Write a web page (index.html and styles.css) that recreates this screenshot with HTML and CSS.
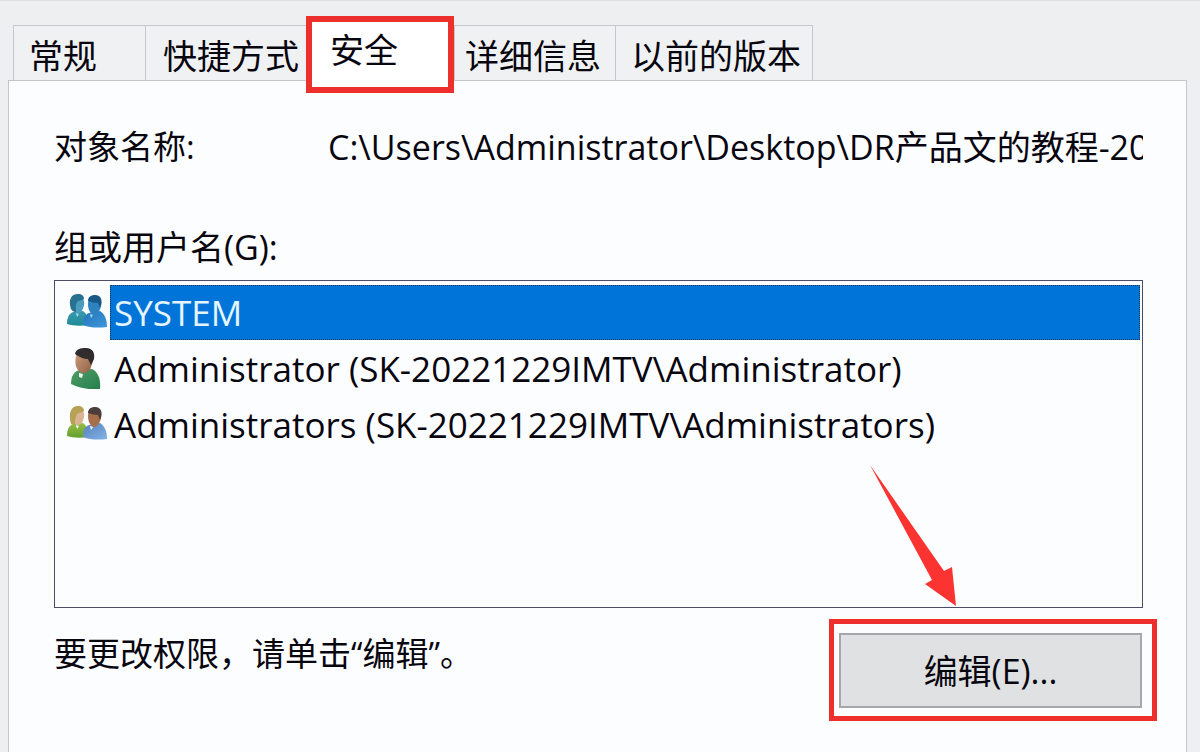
FILE: index.html
```html
<!doctype html>
<html lang="zh-CN">
    <head>
        <meta charset="utf-8" />
        <title>属性</title>
        <link rel="stylesheet" href="styles.css" />
    </head>
    <body>
        <div class="tabs" role="tablist">
            <button class="tab" role="tab">常规</button>
            <button class="tab" role="tab">快捷方式</button>
            <button class="tab active" role="tab" aria-selected="true">安全</button>
            <button class="tab" role="tab">详细信息</button>
            <button class="tab" role="tab">以前的版本</button>
        </div>

        <main class="panel" role="tabpanel">
            <div class="object-row">
                <span class="object-label">对象名称:</span>
                <span class="object-path">C:\Users\Administrator\Desktop\DR产品文的教程-20</span>
            </div>

            <div id="groupLabel" class="group-label">组或用户名(G):</div>
            <ul class="user-list" role="listbox" aria-labelledby="groupLabel">
                <li class="user" role="option" aria-selected="true">
                    <svg class="user-icon" viewBox="0 0 40 40">
                        <defs>
                            <linearGradient id="teal" x2="0" y2="1">
                                <stop offset="0" stop-color="#3a99ad" />
                                <stop offset="1" stop-color="#1f8a96" />
                            </linearGradient>
                            <linearGradient id="blue" x2="1" y2="1">
                                <stop offset="0" stop-color="#2474b8" />
                                <stop offset="1" stop-color="#3f97dc" />
                            </linearGradient>
                        </defs>
                        <path fill="url(#teal)" d="M0 32c0-7 2-10 6-12l10-1c4 3 6 8 5 14-7 1-15 1-21-1z" />
                        <path fill="#4a9cc0" d="M5 10c1-4 4-6 7-6 4 1 6 5 5 9-1 5-3 8-6 8-4 0-6-5-6-11z" />
                        <path fill="#28718f" d="M4 17C1 8 4 2 11 2c4 0 6 2 6 5-3 2-5 1-7 3-2 3-1 6-1 10-2 0-4-1-5-3z" />
                        <path fill="url(#blue)" d="M16 33c0-6 1-10 6-12l11-2c5 3 7 9 7 16-8 1-17 1-24-2z" />
                        <path fill="#2f82c0" d="M21 12c0-5 3-8 7-8 5 0 7 5 6 10-1 5-4 9-7 9-4-1-6-6-6-11z" />
                        <path fill="#195887" d="M21 9c0-4 3-6 7-6 7 0 8 7 5 13l-2-5c-3 0-7-1-10-2z" />
                        <path fill="#a7dff2" d="M9 21l3 1-2 3zM23 22l3 1-2 3z" />
                    </svg>
                    <span class="user-name">SYSTEM</span>
                </li>
                <li class="user" role="option" aria-selected="false">
                    <svg class="user-icon" viewBox="0 0 40 40">
                        <defs>
                            <linearGradient id="green" x2="1" y2="1">
                                <stop offset="0" stop-color="#529d66" />
                                <stop offset="1" stop-color="#237f4d" />
                            </linearGradient>
                            <linearGradient id="skin" x2="1" y2="1">
                                <stop offset="0" stop-color="#d0a27e" />
                                <stop offset="1" stop-color="#8d5d43" />
                            </linearGradient>
                        </defs>
                        <path fill="url(#green)" d="M4 36c0-8 3-13 9-14l12-1c6 3 9 10 8 20-11 1-21-1-29-5z" />
                        <path fill="url(#skin)" d="M9 8c1-5 4-7 9-7 6 1 9 6 8 12l-3 9c-4 4-9 4-12 0-3-4-3-9-2-14z" />
                        <path fill="#302b2d" d="M8 6c1-5 5-6 11-6 7 0 9 5 8 11l-3 6-3-6c-4 0-9-2-13-5z" />
                        <path fill="#edf8ed" d="M12 25l4 1-1 4-3-1z" />
                    </svg>
                    <span class="user-name">Administrator (SK-20221229IMTV\Administrator)</span>
                </li>
                <li class="user" role="option" aria-selected="false">
                    <svg class="user-icon" viewBox="0 0 40 40">
                        <defs>
                            <linearGradient id="lime" x2="0" y2="1">
                                <stop offset="0" stop-color="#95bd46" />
                                <stop offset="1" stop-color="#63a02c" />
                            </linearGradient>
                            <linearGradient id="sky" x2="1" y2="1">
                                <stop offset="0" stop-color="#557fba" />
                                <stop offset="1" stop-color="#83b4e7" />
                            </linearGradient>
                        </defs>
                        <path fill="url(#lime)" d="M0 32c0-7 2-10 6-12l10-1c4 3 6 8 5 14-7 1-15 1-21-1z" />
                        <path fill="#d8b493" d="M5 10c1-4 4-6 7-6 4 1 6 5 5 9-1 5-3 8-6 8-4 0-6-5-6-11z" />
                        <path fill="#b6a155" d="M4 20C1 9 4 2 11 2c4 0 6 2 6 5-3 2-5 1-7 3-2 3-2 6-2 10-1 1-3 1-4 0z" />
                        <path fill="url(#sky)" d="M16 33c0-6 1-10 6-12l11-2c5 3 7 9 7 16-8 1-17 1-24-2z" />
                        <path fill="#a66f4c" d="M21 12c0-5 3-8 7-8 5 0 7 5 6 10-1 5-4 9-7 9-4-1-6-6-6-11z" />
                        <path fill="#4b3d3b" d="M21 9c0-4 3-6 7-6 7 0 8 7 5 13l-2-5c-3 0-7-1-10-2z" />
                        <path fill="#fff" d="M9 21l3 1-2 3zM23 22l3 1-2 3z" />
                    </svg>
                    <span class="user-name">Administrators (SK-20221229IMTV\Administrators)</span>
                </li>
            </ul>

            <div class="edit-row">
                <span class="edit-hint">要更改权限，请单击“编辑”。</span>
                <div class="edit-frame">
                    <svg class="arrow" viewBox="0 0 88 144">
                        <path d="M1 1L75 107l8-4 4 39-31-22 7-4z" />
                    </svg>
                    <button class="edit">编辑(E)...</button>
                </div>
            </div>
        </main>
    </body>
</html>
```
FILE: styles.css
```css
* {
    box-sizing: border-box;
}
body {
    margin: 0;
    padding: 24px 13px 0 8px;
    min-height: 100vh;
    display: flex;
    flex-direction: column;
    background: #eeeff1;
    border-top: 1px solid #dfe2e3;
    color: #08060f;
    font-family: "Open Sans", "Noto Sans CJK SC", sans-serif;
    font-size: 34px;
    line-height: 48px;
    overflow: hidden;
}
button {
    font: inherit;
    color: inherit;
    cursor: pointer;
}
.tabs {
    display: flex;
    height: 55px;
    padding-left: 5px;
    white-space: nowrap;
}
.tab {
    padding: 6px 15px 0;
    text-align: left;
    background: #f0f1f2;
    border: 1px solid #c4c8ca;
    border-bottom: none;
    border-right: none;
    line-height: 46px;
}
.tab:first-child {
    width: 132px;
}
.tab:nth-child(2) {
    width: 161px;
    padding-left: 17px;
}
.tab:nth-child(4) {
    width: 161px;
    padding-left: 10px;
}
.tab:last-child {
    width: 198px;
    border-right: 1px solid #c4c8ca;
}
.tab.active {
    position: relative;
    width: 148px;
    margin: -9px 0 -13px;
    padding: 5px 18px 0;
    display: flex;
    background: #fff;
    border: 6px solid #ed302d;
}
.panel {
    flex: 1;
    padding: 42px 43px 30px 45px;
    background: #fcfdff;
    border: 1px solid #c4c6ca;
    border-bottom: none;
}
.object-row {
    display: flex;
    white-space: nowrap;
}
.object-label {
    flex: 0 0 274px;
    font-size: 33px;
}
.object-path {
    flex: 1;
    min-width: 0;
    overflow: hidden;
}
.group-label {
    margin-top: 52px;
}
.user-list {
    height: 328px;
    margin: 9px 0 0;
    padding: 3px 2px;
    list-style: none;
    background: #fcfdff;
    border: 1px solid #4c4c68;
    font-size: 35px;
}
.user {
    display: flex;
    align-items: center;
    height: 56px;
}
.user-icon {
    flex: none;
    width: 40px;
    height: 42px;
    margin: 0 3px 0 10px;
}
.user-name {
    flex: 1;
    padding-left: 3px;
    line-height: 53px;
    border: 1px solid transparent;
}
.user[aria-selected="true"] .user-name {
    background: #0074d9;
    color: #e4f5ff;
    border: 1px dotted #1b3554;
}
.edit-row {
    display: flex;
    justify-content: space-between;
    margin: 11px -14px 0 0;
}
.edit-hint {
    padding-top: 11px;
    font-size: 33px;
}
/* red marker around the edit button */
.edit-frame {
    position: relative;
    padding: 9px 10px 8px 5px;
    border: 5px solid #ed302d;
}
.edit {
    width: 303px;
    height: 75px;
    padding: 0;
    background: #e0e1e3;
    border: 2px solid #a5a7ab;
}
.arrow {
    position: absolute;
    left: 35px;
    top: -160px;
    width: 88px;
    height: 144px;
    fill: #fb3431;
}
```
